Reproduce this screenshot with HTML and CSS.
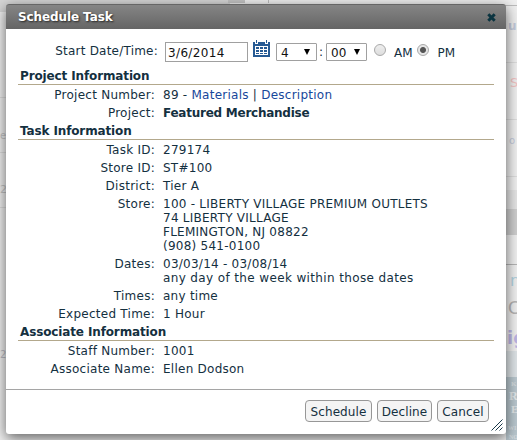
FILE: index.html
```html
<!DOCTYPE html>
<html lang="en">
<head>
  <meta charset="UTF-8">
  <title>Schedule Task</title>
  <link rel="stylesheet" href="styles.css">
</head>
<body>
  <!-- Faded page behind the dialog -->
  <svg class="backdrop" width="517" height="440" aria-hidden="true">
    <rect width="517" height="440" fill="#efefef"/>
    <rect width="230" height="12" fill="#d6d6d6"/>
    <path d="M268.500 0V3" stroke="#bbb"/>
    <rect x="228" y="0" width="17" height="3" fill="#c4c4c4"/>
    <path d="M505 5.500H517" stroke="#bcbcbc"/>
    <path d="M0 97.500H6M0 152.500H6M0 207.500H6M506 62.500H517M506 119.500H517M506 176.500H517" stroke="#dcdcdc"/>
    <rect x="506" y="190" width="11" height="19" fill="#e4e4e4"/>
    <rect x="506" y="209" width="11" height="26" fill="#cdcdcd"/>
    <path d="M506 264.500H517" stroke="#b4b4b4"/>
    <rect x="506" y="351" width="11" height="26" fill="#dde3e6"/>
    <rect x="506" y="377" width="11" height="63" fill="#b9c7ce"/>
    <text x="508" y="30" fill="#c3cbdc" font-size="12" font-weight="bold">ur</text>
    <text x="510" y="87" fill="#f2c4c4" font-size="13">S</text>
    <text x="509" y="144" fill="#c3cbdc" font-size="10">o</text>
    <text x="510" y="286" fill="#b2d2df" font-size="16">n</text>
    <text x="508" y="314" fill="#b5b5b5" font-size="17">C</text>
    <text x="507" y="344" fill="#bbb5e4" font-size="18" font-weight="bold">ig</text>
    <text x="511" y="386" fill="#d6dde0" font-size="7" class="serif">K</text>
    <text x="509" y="400" fill="#e2e8ea" font-size="12" class="serif">R</text>
    <text x="511" y="413" fill="#e2e8ea" font-size="11" class="serif">E</text>
    <text x="508" y="430" fill="#d6dde0" font-size="6" class="serif">WI</text>
    <text x="509" y="439" fill="#d6dde0" font-size="6" class="serif">NO</text>
    <text x="0" y="139" fill="#c4c4c4" font-size="10">e</text>
    <text x="0" y="193" fill="#c4c4c4" font-size="11">2</text>
    <text x="0" y="358" fill="#bcbcc4" font-size="10">2</text>
  </svg>

  <div class="dialog">
    <div class="dialog-title">
      <span>Schedule Task</span>
      <svg class="close" width="9" height="9" viewBox="0 0 9 9">
        <path d="M1.300 1.300L7.700 7.700M7.700 1.300L1.300 7.700" stroke="#0b3440" stroke-width="3"/>
      </svg>
    </div>

    <div class="dialog-body">
      <div class="time-row">
        <label class="time-label" for="start">Start Date/Time:</label>
        <input class="date" id="start" type="text" value="3/6/2014">
        <svg class="calendar" width="17" height="17" viewBox="0 0 17 17" shape-rendering="crispEdges">
          <path fill="#265a94" d="M0 2H2V4H5V2H12V4H15V2H17V17H0Z"/>
          <path fill="#265a94" d="M3 0H4V3H3ZM13 0H14V3H13Z"/>
          <path fill="#fff" d="M2 6H15V15H2Z"/>
          <path fill="#265a94" d="M3 7H6V9H3ZM7 7H10V9H7ZM11 7H14V9H11ZM3 10H6V12H3ZM7 10H10V12H7ZM11 10H14V12H11ZM3 13H6V14H3ZM7 13H10V14H7ZM11 13H14V14H11Z"/>
        </svg>
        <div class="select">4<i class="arrow"></i></div>
        <span class="colon">:</span>
        <div class="select">00<i class="arrow"></i></div>
        <i class="radio"></i><span class="am">AM</span>
        <i class="radio checked"></i><span class="pm">PM</span>
      </div>

      <h3>Project Information</h3>
      <dl>
        <dt>Project Number:</dt>
        <dd>89 - <a>Materials</a> | <a>Description</a></dd>
        <dt>Project:</dt>
        <dd class="bold">Featured Merchandise</dd>
      </dl>

      <h3>Task Information</h3>
      <dl>
        <dt>Task ID:</dt>
        <dd>279174</dd>
        <dt>Store ID:</dt>
        <dd>ST#100</dd>
        <dt>District:</dt>
        <dd>Tier A</dd>
        <dt>Store:</dt>
        <dd>100 - LIBERTY VILLAGE PREMIUM OUTLETS<br>74 LIBERTY VILLAGE<br>FLEMINGTON, NJ 08822<br>(908) 541-0100</dd>
        <dt>Dates:</dt>
        <dd>03/03/14 - 03/08/14<br><span class="days">any day of the week within those dates</span></dd>
        <dt>Times:</dt>
        <dd>any time</dd>
        <dt>Expected Time:</dt>
        <dd>1 Hour</dd>
      </dl>

      <h3>Associate Information</h3>
      <dl>
        <dt>Staff Number:</dt>
        <dd>1001</dd>
        <dt>Associate Name:</dt>
        <dd>Ellen Dodson</dd>
      </dl>
    </div>

    <div class="dialog-buttons">
      <button class="schedule">Schedule</button>
      <button class="decline">Decline</button>
      <button class="cancel">Cancel</button>
    </div>
    <svg class="resize" width="12" height="12" viewBox="0 0 12 12">
      <path d="M0.500 11.500L11.500 0.500M4.500 11.500L11.500 4.500M8.500 11.500L11.500 8.500" stroke="#1b3a4a" fill="none"/>
    </svg>
  </div>
</body>
</html>
```
FILE: styles.css
```css
body {
  margin: 0;
  height: 440px;
  overflow: hidden;
  position: relative;
  font-family: Verdana, "DejaVu Sans", sans-serif;
  font-size: 12px;
  color: #14303f;
}

.backdrop {
  position: absolute;
  top: 0;
  left: 0;
}

.serif {
  font-family: "Liberation Serif", serif;
  font-weight: bold;
}

/* Dialog */
.dialog {
  position: relative;
  box-sizing: border-box;
  width: 500px;
  height: 430px;
  margin: 0 0 0 6px;
  top: 4px;
  background: #fff;
  border-radius: 3px;
  box-shadow: 0 4px 14px rgba(0, 0, 0, 0.6);
}

.dialog-title {
  display: flex;
  align-items: center;
  justify-content: space-between;
  box-sizing: border-box;
  height: 25px;
  padding: 0 10px 0 12px;
  border-top: 1px solid #666;
  border-radius: 3px 3px 0 0;
  background: linear-gradient(#858585, #656565);
  color: #fff;
  font-weight: bold;
  letter-spacing: -0.1px;
  text-shadow: 1px 1px 2px #222;
}

.dialog-body {
  height: 360px;
  padding: 0 12px;
  border-bottom: 1px solid #a5a5a5;
}

/* Date and time */
.time-row {
  display: flex;
  height: 37px;
}

.time-label {
  width: 140px;
  padding-top: 15px;
  line-height: 14px;
  letter-spacing: 0.22px;
  text-align: right;
}

.date {
  box-sizing: border-box;
  width: 83px;
  height: 20px;
  margin: 13px 5px 0 7px;
  padding: 2px 2px 0;
  border: 1px solid #a0a0a0;
  font: inherit;
  letter-spacing: 0.35px;
  color: #111;
}

.calendar {
  margin-top: 11px;
}

.select {
  display: flex;
  align-items: center;
  justify-content: space-between;
  box-sizing: border-box;
  width: 41px;
  height: 18px;
  margin: 14px 0 0 6px;
  padding: 2px 6px 0 4px;
  border: 1px solid #a0a0a0;
  border-radius: 1px;
  color: #111;
}

.arrow {
  margin-top: -2px;
  border: 3px solid transparent;
  border-top: 6px solid #000;
  border-bottom: 0;
}

.colon {
  width: 4px;
  margin: 16px -1px 0 2px;
}

.colon + .select {
  margin-left: 4px;
}

.radio {
  box-sizing: border-box;
  width: 12px;
  height: 12px;
  margin: 15px 0 0 7px;
  border: 1px solid #a9a9a9;
  border-radius: 50%;
  background: linear-gradient(#eee, #ddd);
}

.radio.checked {
  margin-left: 4px;
  background: radial-gradient(circle, #555 2.5px, #e6e6e6 3.5px);
}

.am,
.pm {
  margin: 17px 0 0 8px;
}

.pm {
  margin-left: 9px;
}

/* Sections */
h3 {
  box-sizing: border-box;
  height: 19px;
  margin: 0;
  padding: 3px 0 0 2px;
  border-bottom: 1px solid #b3a88c;
  font-size: 12px;
  line-height: 14px;
  letter-spacing: -0.13px;
}

dl {
  display: grid;
  grid-template-columns: 137px 1fr;
  column-gap: 8px;
  margin: 0;
}

dt,
dd {
  margin: 0;
  padding: 3px 0 1px;
  line-height: 14px;
  letter-spacing: 0.25px;
  white-space: nowrap;
}

dt {
  text-align: right;
}

.days {
  letter-spacing: 0.37px;
}

.bold {
  font-weight: bold;
  letter-spacing: -0.25px;
}

a {
  color: #17479b;
}

/* Buttons */
.dialog-buttons {
  display: flex;
  justify-content: flex-end;
  gap: 5px;
  padding: 10px 17px 0 0;
}

button {
  box-sizing: border-box;
  height: 22px;
  padding: 1px 0 0;
  border: 1px solid #979797;
  border-radius: 4px;
  background: #f4f4f4;
  font: inherit;
  letter-spacing: 0.1px;
  color: #14303f;
}

.schedule {
  width: 67px;
}

.decline {
  width: 55px;
}

.cancel {
  width: 52px;
}

.resize {
  position: absolute;
  right: 3px;
  bottom: 3px;
}
```
